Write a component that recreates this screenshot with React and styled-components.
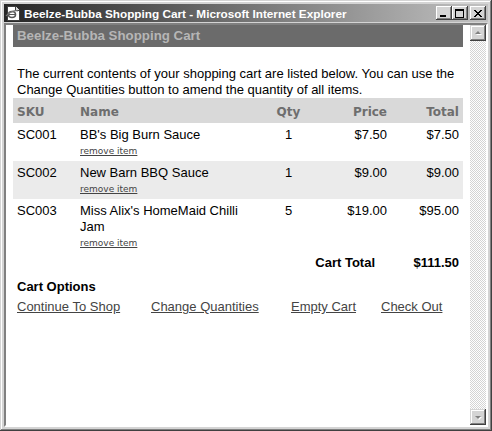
import styled, { createGlobalStyle } from "styled-components";

const items = [
  { sku: "SC001", name: "BB's Big Burn Sauce", qty: 1, price: "$7.50", total: "$7.50" },
  { sku: "SC002", name: "New Barn BBQ Sauce", qty: 1, price: "$9.00", total: "$9.00", shaded: true },
  { sku: "SC003", name: "Miss Alix's HomeMaid Chilli Jam", qty: 5, price: "$19.00", total: "$95.00" },
];

const options = ["Continue To Shop", "Change Quantities", "Empty Cart", "Check Out"];

// little IE page icon for the caption
function AppIcon() {
  return (
    <svg width="16" height="16" viewBox="0 0 16 16" shapeRendering="crispEdges">
      <path d="M2 1h8l4 4v10H2z" fill="#fff" stroke="#404040" />
      <path d="M10 1v4h4" fill="#d4d4d4" stroke="#404040" />
      <ellipse cx="7" cy="9.5" rx="3.5" ry="3" fill="none" stroke="#555" strokeWidth="1.6" shapeRendering="auto" />
      <path d="M4 9.5h6" stroke="#555" strokeWidth="1.4" />
      <path d="M1 11c3-4 9-6 12-5" fill="none" stroke="#777" strokeWidth="1.2" shapeRendering="auto" />
    </svg>
  );
}

function CaptionGlyph({ kind }) {
  return (
    <svg width="10" height="9" viewBox="0 0 10 9" shapeRendering="crispEdges">
      {kind === "min" && <rect x="1" y="6" width="6" height="2" fill="#000" />}
      {kind === "max" && (
        <>
          <rect x="0.5" y="0.5" width="8" height="8" fill="none" stroke="#000" />
          <rect x="0" y="1" width="9" height="1" fill="#000" />
        </>
      )}
      {kind === "close" && (
        <path d="M1 1l7 7M2 1l7 7M8 1l-7 7M9 1l-7 7" stroke="#000" strokeWidth="1" shapeRendering="auto" />
      )}
    </svg>
  );
}

function Arrow({ dir }) {
  const pts = dir === "up" ? "4,6 7,3 10,6" : "4,4 10,4 7,7";
  return (
    <svg width="14" height="10" viewBox="0 0 14 10">
      <polygon points={pts} transform="translate(1 1)" fill="#fff" />
      <polygon points={pts} fill="#808080" />
    </svg>
  );
}

export default function App() {
  return (
    <>
      <GlobalStyle />
      <Window>
        <TitleBar>
          <AppIcon />
          <Caption>Beelze-Bubba Shopping Cart - Microsoft Internet Explorer</Caption>
          <Controls>
            <CapButton><CaptionGlyph kind="min" /></CapButton>
            <CapButton><CaptionGlyph kind="max" /></CapButton>
            <CapButton $gap><CaptionGlyph kind="close" /></CapButton>
          </Controls>
        </TitleBar>
        <Client>
          <Page>
            <HeaderBar>Beelze-Bubba Shopping Cart</HeaderBar>
            <Intro>
              The current contents of your shopping cart are listed below. You can use the
              Change Quantities button to amend the quantity of all items.
            </Intro>
            <Table>
              <colgroup>
                <col style={{ width: 63 }} />
                <col style={{ width: 180 }} />
                <col style={{ width: 65 }} />
                <col style={{ width: 70 }} />
                <col />
              </colgroup>
              <thead>
                <tr>
                  <HeadCell>SKU</HeadCell>
                  <HeadCell>Name</HeadCell>
                  <HeadCell $align="center">Qty</HeadCell>
                  <HeadCell $align="right">Price</HeadCell>
                  <HeadCell $align="right">Total</HeadCell>
                </tr>
              </thead>
              <tbody>
                {items.map((it) => (
                  <Row key={it.sku} $shaded={it.shaded}>
                    <Cell>{it.sku}</Cell>
                    <Cell>
                      {it.name}
                      <Remove href="#">remove item</Remove>
                    </Cell>
                    <Cell $align="center">{it.qty}</Cell>
                    <Cell $align="right">{it.price}</Cell>
                    <Cell $align="right">{it.total}</Cell>
                  </Row>
                ))}
                <tr>
                  <TotalCell colSpan={4}>Cart Total</TotalCell>
                  <TotalCell $last>$111.50</TotalCell>
                </tr>
              </tbody>
            </Table>
            <OptionsTitle>Cart Options</OptionsTitle>
            <OptionLinks>
              {options.map((o) => (
                <OptionLink key={o} href="#">{o}</OptionLink>
              ))}
            </OptionLinks>
          </Page>
          <ScrollBar>
            <ScrollButton><Arrow dir="up" /></ScrollButton>
            <Track />
            <ScrollButton><Arrow dir="down" /></ScrollButton>
          </ScrollBar>
        </Client>
      </Window>
    </>
  );
}

const GlobalStyle = createGlobalStyle`
  html, body {
    margin: 0;
    padding: 0;
    background: #d4d4d4;
  }
  * { box-sizing: border-box; }
`;

const Window = styled.div`
  width: 492px;
  height: 431px;
  padding: 4px;
  display: flex;
  flex-direction: column;
  background: #d4d4d4;
  box-shadow: inset -1px -1px #404040, inset 1px 1px #d4d4d4,
    inset -2px -2px #808080, inset 2px 2px #ffffff;
`;

const TitleBar = styled.div`
  height: 18px;
  display: flex;
  align-items: center;
  padding: 0 2px 0 1px;
  background: linear-gradient(to right, #262626, #c2c2c2);
`;

const Caption = styled.div`
  flex: 1;
  margin-left: 3px;
  color: #fff;
  font: bold 11.75px "Liberation Sans", Arial, sans-serif;
  white-space: nowrap;
`;

const Controls = styled.div`
  display: flex;
`;

const CapButton = styled.div`
  width: 16px;
  height: 14px;
  margin-left: ${(p) => (p.$gap ? "2px" : "0")};
  display: flex;
  align-items: center;
  justify-content: center;
  padding-top: 1px;
  background: #d4d4d4;
  box-shadow: inset -1px -1px #404040, inset 1px 1px #ffffff,
    inset -2px -2px #808080, inset 2px 2px #d4d4d4;
`;

const Client = styled.div`
  flex: 1;
  margin-top: 1px;
  display: flex;
  min-height: 0;
  border: 2px solid;
  border-color: #808080 #ffffff #ffffff #808080;
  box-shadow: inset 1px 1px #404040;
`;

const Page = styled.div`
  flex: 1;
  background: #fff;
  padding: 0 7px;
  overflow: hidden;
  font: 13px/16px "Liberation Sans", Arial, sans-serif;
  color: #000;
`;

const HeaderBar = styled.div`
  height: 22px;
  line-height: 22px;
  padding-left: 4px;
  background: #6b6b6b;
  color: #b6b6b6;
  font-weight: bold;
  font-size: 13.3px;
`;

const Intro = styled.p`
  margin: 19px 0 0 4px;
`;

const Table = styled.table`
  width: 100%;
  border-collapse: collapse;
  table-layout: fixed;
`;

const HeadCell = styled.th`
  padding: 6px 4px 3px;
  background: #d9d9d9;
  color: #6e6e6e;
  font: bold 12px/16px "DejaVu Sans", Verdana, sans-serif;
  text-align: ${(p) => p.$align || "left"};
`;

const Row = styled.tr`
  background: ${(p) => (p.$shaded ? "#ebebeb" : "transparent")};
`;

const Cell = styled.td`
  padding: 4px 4px 4px;
  vertical-align: top;
  text-align: ${(p) => p.$align || "left"};
`;

const Remove = styled.a`
  display: block;
  margin-top: 2px;
  font: 9px/12px "DejaVu Sans", Verdana, sans-serif;
  color: #444;
  text-decoration: underline;
`;

const TotalCell = styled.td`
  padding: 2px ${(p) => (p.$last ? "4px" : "16px")} 0 4px;
  text-align: right;
  font-weight: bold;
`;

const OptionsTitle = styled.div`
  margin: 8px 0 0 4px;
  font-weight: bold;
`;

const OptionLinks = styled.div`
  margin: 4px 0 0 4px;
  display: grid;
  grid-template-columns: 134px 140px 90px auto;
`;

const OptionLink = styled.a`
  color: #444;
  text-decoration: underline;
  justify-self: start;
`;

const ScrollBar = styled.div`
  width: 16px;
  display: flex;
  flex-direction: column;
`;

const ScrollButton = styled.div`
  width: 16px;
  height: 16px;
  display: flex;
  align-items: center;
  justify-content: center;
  background: #d4d4d4;
  box-shadow: inset -1px -1px #404040, inset 1px 1px #d4d4d4,
    inset -2px -2px #808080, inset 2px 2px #ffffff;
`;

const Track = styled.div`
  flex: 1;
  background: repeating-conic-gradient(#d4d4d4 0 25%, #ffffff 0 50%) 0 0 / 2px 2px;
`;
